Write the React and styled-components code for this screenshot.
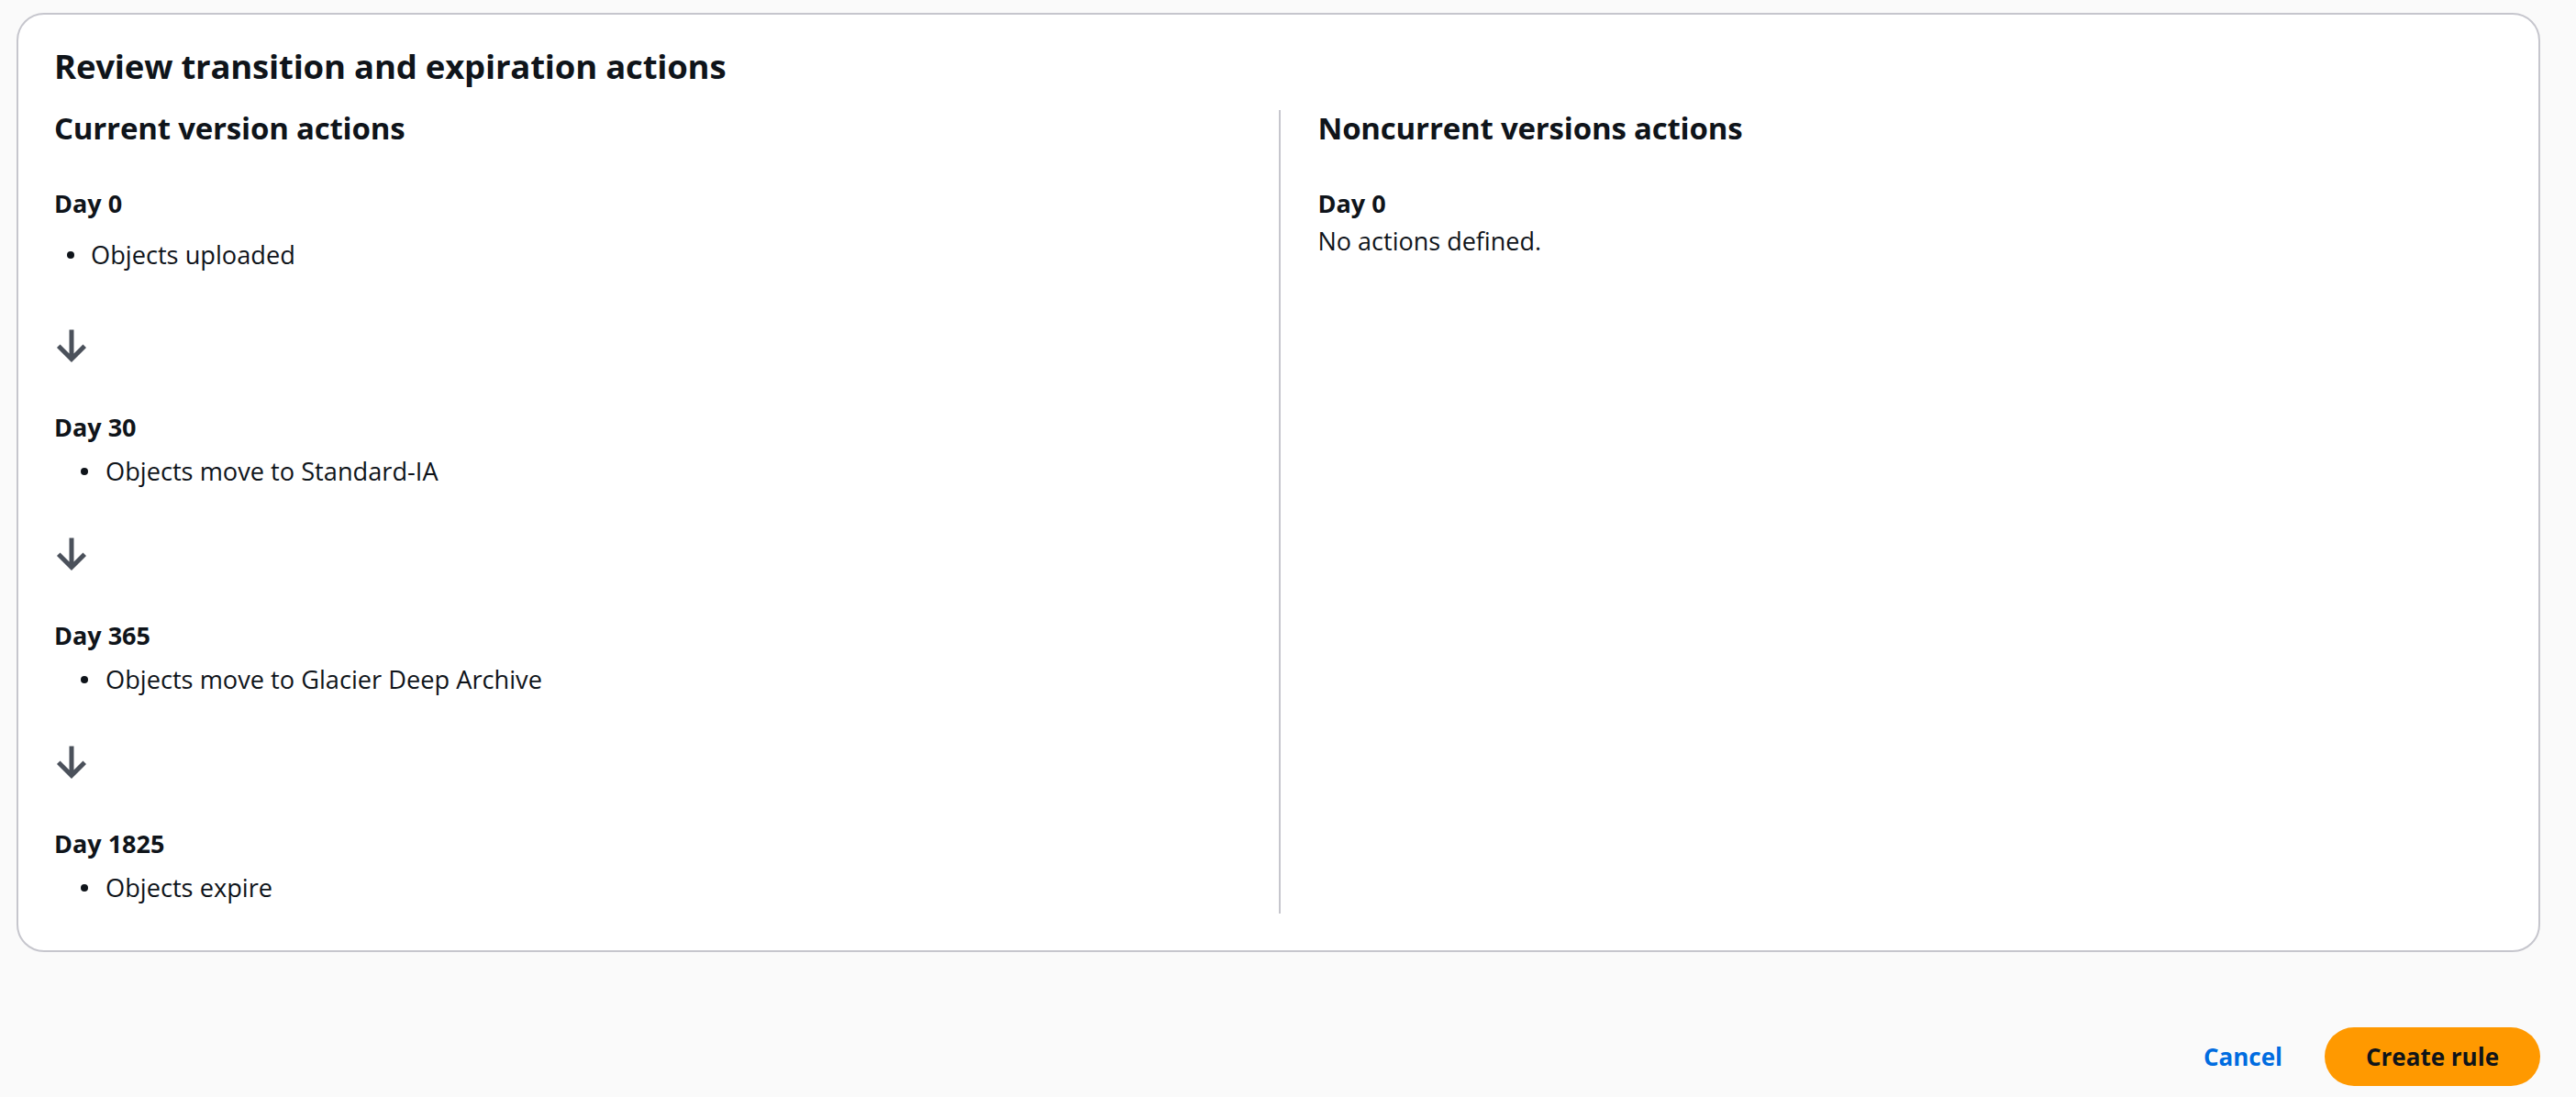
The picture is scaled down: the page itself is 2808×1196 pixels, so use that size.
import React from "react";
import styled, { createGlobalStyle } from "styled-components";

const GlobalStyle = createGlobalStyle`
	body {
		margin: 0;
		background: #fafafa;
		font-family: "Open Sans", "Noto Sans", sans-serif;
		color: #0f141a;
	}
`;

const currentActions = [
	{ day: 0, text: "Objects uploaded" },
	{ day: 30, text: "Objects move to Standard-IA" },
	{ day: 365, text: "Objects move to Glacier Deep Archive" },
	{ day: 1825, text: "Objects expire" },
];

function ArrowDown({ afterFirst }) {
	return (
		<ArrowIcon viewBox="0 0 16 16" fill="none" afterFirst={afterFirst}>
			<path
				d="M8 1v13M2 8.5l6 6 6-6"
				stroke="currentColor"
				strokeWidth="2.1"
				strokeLinejoin="miter"
			/>
		</ArrowIcon>
	);
}

function App() {
	return (
		<Page>
			<GlobalStyle />
			<Card>
				<Title>Review transition and expiration actions</Title>
				<Columns>
					<Column>
						<SubTitle>Current version actions</SubTitle>
						{currentActions.map((action, index) => (
							<Step key={action.day}>
								{index > 0 && <ArrowDown afterFirst={index === 1} />}
								<DayLabel>Day {action.day}</DayLabel>
								<ActionList first={index === 0}>
									<ActionItem first={index === 0}>
										<Dot />
										{action.text}
									</ActionItem>
								</ActionList>
							</Step>
						))}
					</Column>
					<Column divider>
						<SubTitle>Noncurrent versions actions</SubTitle>
						<DayLabel>Day 0</DayLabel>
						<EmptyText>No actions defined.</EmptyText>
					</Column>
				</Columns>
			</Card>
			<Footer>
				<LinkButton>Cancel</LinkButton>
				<PrimaryButton>Create rule</PrimaryButton>
			</Footer>
		</Page>
	);
}

export default App;

const Page = styled.div`
	padding: 14px 39px 20px 18px;
`;

const Card = styled.div`
	background: #ffffff;
	border: 2px solid #c6c6cd;
	border-radius: 30px;
	padding: 34px 39px 40px 39px;
`;

const Title = styled.h2`
	margin: 0 0 26px 0;
	font-size: 36.5px;
	line-height: 44px;
	font-weight: 700;
	letter-spacing: -0.2px;
`;

const Columns = styled.div`
	display: grid;
	grid-template-columns: 1fr 1fr;
`;

const Column = styled.div`
	display: flex;
	flex-direction: column;
	padding-bottom: 9px;
	border-left: ${(props) => (props.divider ? "2px solid #c6c6cd" : "none")};
	padding-left: ${(props) => (props.divider ? "41px" : "0")};
`;

const SubTitle = styled.h3`
	margin: 0 0 43px 0;
	font-size: 33px;
	line-height: 40px;
	font-weight: 700;
	letter-spacing: -0.2px;
`;

const Step = styled.div`
	display: flex;
	flex-direction: column;
`;

const ArrowIcon = styled.svg`
	width: 38px;
	height: 38px;
	color: #4b515b;
	margin: ${(props) => (props.afterFirst ? "60px" : "51px")} 0 52px 0;
	display: block;
`;

const DayLabel = styled.div`
	font-size: 27px;
	line-height: 38px;
	font-weight: 700;
`;

const ActionList = styled.ul`
	list-style: none;
	margin: ${(props) => (props.first ? "18px" : "10px")} 0 0 0;
	padding: 0 0 0 ${(props) => (props.first ? "14px" : "29px")};
`;

const ActionItem = styled.li`
	display: flex;
	align-items: center;
	gap: ${(props) => (props.first ? "18px" : "19px")};
	font-size: 27.2px;
	line-height: 38px;
`;

const Dot = styled.span`
	width: 8px;
	height: 8px;
	border-radius: 50%;
	background: #0f141a;
	flex: none;
`;

const EmptyText = styled.p`
	margin: 3px 0 0 0;
	font-size: 27px;
	line-height: 38px;
`;

const Footer = styled.div`
	display: flex;
	justify-content: flex-end;
	align-items: center;
	gap: 46px;
	margin-top: 82px;
`;

const LinkButton = styled.button`
	border: none;
	background: none;
	padding: 0;
	font-family: inherit;
	font-size: 26px;
	font-weight: 700;
	color: #006ce0;
	cursor: pointer;
`;

const PrimaryButton = styled.button`
	height: 64px;
	padding: 0 45px;
	border: none;
	border-radius: 32px;
	background: #ff9900;
	color: #0f141a;
	font-family: inherit;
	font-size: 26px;
	font-weight: 700;
	cursor: pointer;
`;
